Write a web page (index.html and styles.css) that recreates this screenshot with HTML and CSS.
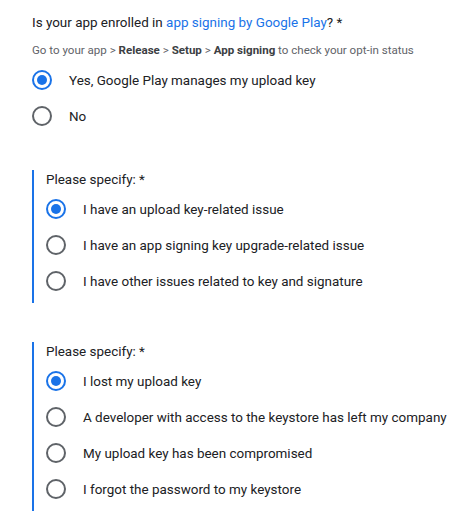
FILE: index.html
```html
<!DOCTYPE html>
<html>
<head>
<meta charset="utf-8">
<link rel="stylesheet" href="styles.css">
</head>
<body>
<div class="form">
  <div class="question">
    <div class="q-title">Is your app enrolled in <span class="link">app signing by Google Play</span>? *</div>
    <div class="q-help">Go to your app &gt; <b>Release</b> &gt; <b>Setup</b> &gt; <b>App signing</b> to check your opt-in status</div>
    <div class="options">
      <label class="option"><span class="radio checked"></span><span class="label">Yes, Google Play manages my upload key</span></label>
      <label class="option"><span class="radio"></span><span class="label">No</span></label>
    </div>
  </div>

  <div class="sub">
    <div class="sub-title">Please specify: *</div>
    <div class="options">
      <label class="option"><span class="radio checked"></span><span class="label">I have an upload key-related issue</span></label>
      <label class="option"><span class="radio"></span><span class="label">I have an app signing key upgrade-related issue</span></label>
      <label class="option"><span class="radio"></span><span class="label">I have other issues related to key and signature</span></label>
    </div>
  </div>

  <div class="sub">
    <div class="sub-title">Please specify: *</div>
    <div class="options">
      <label class="option"><span class="radio checked"></span><span class="label">I lost my upload key</span></label>
      <label class="option"><span class="radio"></span><span class="label">A developer with access to the keystore has left my company</span></label>
      <label class="option"><span class="radio"></span><span class="label">My upload key has been compromised</span></label>
      <label class="option"><span class="radio"></span><span class="label">I forgot the password to my keystore</span></label>
    </div>
  </div>
</div>
</body>
</html>
```

FILE: styles.css
```css
html, body {
  margin: 0;
  padding: 0;
  background: #ffffff;
}

body {
  font-family: Roboto, "Liberation Sans", Arial, sans-serif;
  color: #202124;
}

.form {
  padding: 13px 0 0 32px;
  display: flex;
  flex-direction: column;
}

.q-title {
  font-size: 13.45px;
  line-height: 20px;
  color: #202124;
}

.link {
  color: #1a73e8;
}

.q-help {
  margin-top: 9px;
  font-size: 11.55px;
  line-height: 16px;
  color: #5f6368;
}

.q-help b {
  font-weight: 700;
  color: #3c4043;
}

.question .options {
  margin-top: 4px;
}

.options {
  display: flex;
  flex-direction: column;
}

.option {
  display: flex;
  align-items: center;
  gap: 16px;
  height: 36px;
  font-size: 13.45px;
  color: #202124;
}

.label {
  padding-left: 1px;
}

.radio {
  box-sizing: border-box;
  width: 20px;
  height: 20px;
  flex: none;
  border: 2px solid #5f6368;
  border-radius: 50%;
  display: flex;
  align-items: center;
  justify-content: center;
}

.radio.checked {
  border-color: #1a73e8;
}

.radio.checked::after {
  content: "";
  width: 10px;
  height: 10px;
  border-radius: 50%;
  background: #1a73e8;
}

.sub {
  margin-top: 36px;
  border-left: 2px solid #1a73e8;
  padding: 0 0 4px 12px;
}

.sub + .sub {
  margin-top: 39px;
}

.sub-title {
  font-size: 13.45px;
  line-height: 20px;
  color: #202124;
}

.sub .options {
  margin-top: 1px;
}
```
